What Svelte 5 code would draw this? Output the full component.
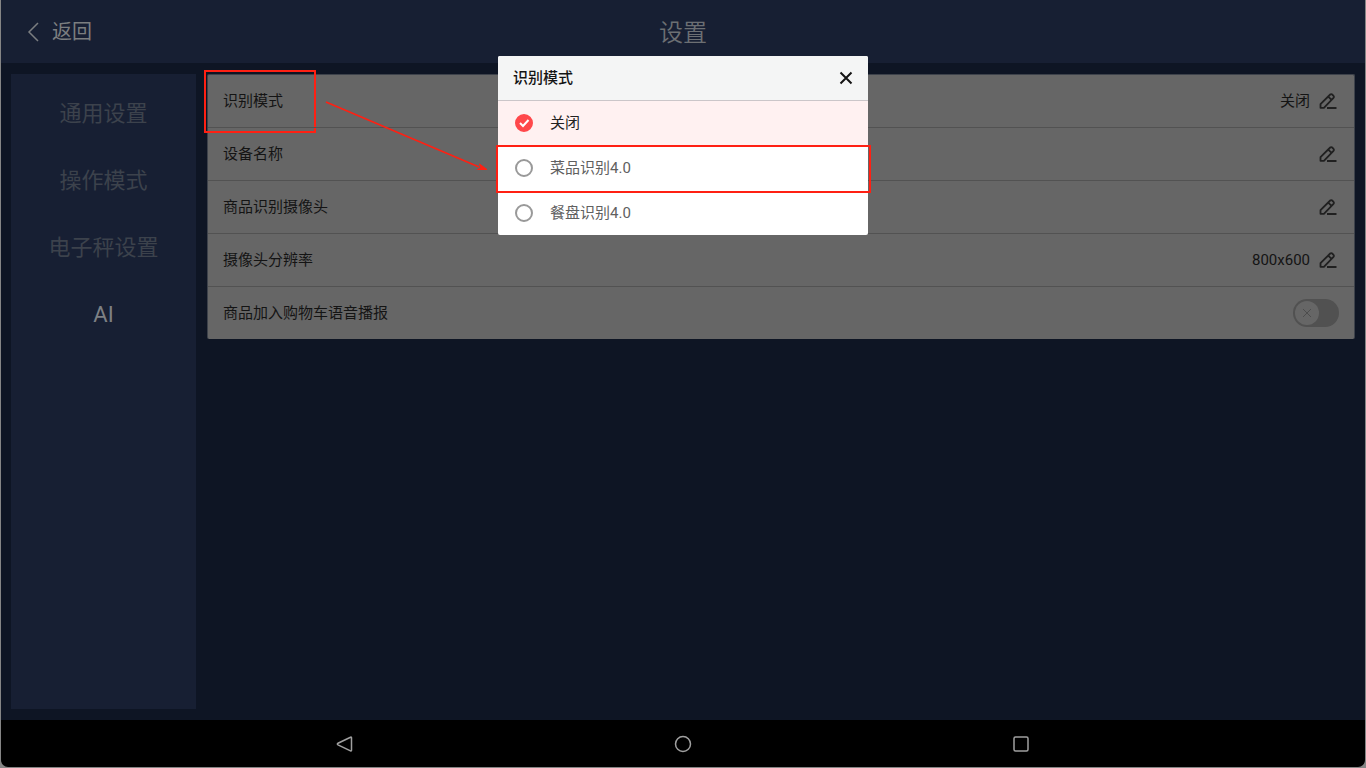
<script>
  const sections = ['通用设置', '操作模式', '电子秤设置', 'AI'];
  const rows = [
    { label: '识别模式', value: '关闭', marked: true },
    { label: '设备名称', value: '' },
    { label: '商品识别摄像头', value: '' },
    { label: '摄像头分辨率', value: '800x600' }
  ];
  const modes = ['关闭', '菜品识别4.0', '餐盘识别4.0'];

  let section = $state('AI');
  let mode = $state('关闭');
  let voice = $state(false);
</script>

<div class="screen">
  <header class="topbar">
    <button class="back">
      <svg width="12" height="20" viewBox="0 0 12 20" aria-hidden="true"><path d="M11 1 2 10l9 9" /></svg>
      返回
    </button>
    <h1>设置</h1>
  </header>

  <div class="content">
    <nav class="sidebar">
      {#each sections as name}
        <button class:active={section === name} onclick={() => (section = name)}>{name}</button>
      {/each}
    </nav>

    <main class="card">
      {#each rows as row}
        <div class="row">
          <span class="label" class:marked={row.marked}>{row.label}</span>
          {#if row.marked}
            <svg class="arrow" width="164" height="74" viewBox="0 0 164 74" aria-hidden="true">
              <path class="shaft" d="M1 2 154 67" />
              <path class="head" d="M162 69.500 152.500 69.500 156 68 154.500 64Z" />
            </svg>
          {/if}
          <span class="value">{row.value}</span>
          <button class="edit" aria-label={row.label}>
            <svg width="18" height="18" viewBox="0 0 18 18" aria-hidden="true">
              <path d="M1.500 15.800V12.200L11.200 2.500a1.400 1.400 0 0 1 2 0l1.300 1.300a1.400 1.400 0 0 1 0 2L4.900 15.800ZM9.300 4.600l3.200 3.200M8 16h9.500" />
            </svg>
          </button>
        </div>
      {/each}
      <div class="row">
        <label class="label" for="voice">商品加入购物车语音播报</label>
        <span class="switch">
          <input id="voice" type="checkbox" bind:checked={voice} />
          <span class="knob">
            <svg width="10" height="10" viewBox="0 0 10 10" aria-hidden="true"><path d="m1 1 8 8M9 1 1 9" /></svg>
          </span>
        </span>
      </div>
    </main>
  </div>

  <footer class="system">
    <button aria-label="返回"><svg width="20" height="20" viewBox="0 0 20 20" aria-hidden="true"><path d="M16.500 3.700v12.600q0 1-1 .5L3 10.900q-1.300-.9 0-1.700L15.500 3.200q1-.5 1 .5Z" /></svg></button>
    <button aria-label="主页"><svg width="20" height="20" viewBox="0 0 20 20" aria-hidden="true"><circle cx="10" cy="10" r="7.500" /></svg></button>
    <button aria-label="最近"><svg width="20" height="20" viewBox="0 0 20 20" aria-hidden="true"><rect x="3" y="3" width="14" height="14" rx="1.500" /></svg></button>
  </footer>

  <div class="dialog" role="dialog" aria-labelledby="dialog-title">
    <div class="dialog-head">
      <h2 id="dialog-title">识别模式</h2>
      <button aria-label="关闭"><svg width="14" height="14" viewBox="0 0 14 14" aria-hidden="true"><path d="m1.500 1.500 11 11M12.500 1.500l-11 11" /></svg></button>
    </div>
    <div class="options">
      {#each modes as name, i}
        <label class="option" class:selected={mode === name} class:outlined={i === 1}>
          <span class="radio">
            <input type="radio" name="mode" value={name} bind:group={mode} />
            <svg width="18" height="18" viewBox="0 0 18 18" aria-hidden="true"><path d="m5 9 3 3 5.500-6" /></svg>
          </span>
          {name}
        </label>
      {/each}
    </div>
  </div>
</div>

<style>
  :global(body) {
    margin: 0;
    background: #858585;
  }
  .screen, .screen * { box-sizing: border-box; }
  .screen {
    position: relative;
    display: flex;
    flex-direction: column;
    min-height: 100vh;
    padding: 0 1px 1px;
    font-family: Roboto, "Noto Sans CJK SC", sans-serif;
    font-size: 15px;
    line-height: 22px;
    font-weight: 400;
    color: #141414;
  }
  button {
    display: flex;
    align-items: center;
    justify-content: center;
    padding: 0;
    border: 0;
    background: none;
    font: inherit;
    color: inherit;
    cursor: pointer;
  }
  h1, h2 { margin: 0; }
  svg { display: block; flex: none; fill: none; stroke: currentColor; }

  .topbar {
    display: grid;
    grid-template-columns: 1fr auto 1fr;
    align-items: center;
    height: 63px;
    padding: 0 26px;
    background: #171f33;
    color: #6c6f73;
  }
  .back {
    justify-self: start;
    gap: 13px;
    font-size: 20px;
    color: #7b7e80;
  }
  .back svg { stroke-width: 1.5; }
  h1 {
    grid-column: 2;
    padding-top: 2px;
    font-size: 24px;
    line-height: 32px;
    font-weight: 350;
  }

  .content {
    flex: 1;
    display: flex;
    align-items: stretch;
    gap: 11px;
    padding: 11px 10px;
    background: #0e1524;
  }
  .sidebar {
    flex: none;
    width: 185px;
    padding-top: 6px;
    background: #171f33;
    color: #3c424c;
    font-size: 22px;
  }
  .sidebar button { width: 100%; height: 67px; }
  .sidebar .active { color: #7d8084; }

  .card {
    flex: 1;
    align-self: flex-start;
    border: 1px solid #3d424b;
    border-width: 1px 1px 0;
    border-radius: 2px;
    background: #666;
  }
  .row {
    position: relative;
    display: flex;
    align-items: center;
    height: 53px;
    padding: 0 16px 0 15px;
  }
  .row:first-child { height: 52px; }
  .row + .row { border-top: 1px solid #525252; }
  .label { position: relative; }
  .marked::after {
    content: "";
    position: absolute;
    inset: -20px -33px -21px -19px;
    border: 2px solid #ff2013;
  }
  .arrow {
    position: absolute;
    left: 117px;
    top: 25px;
    z-index: 1;
    color: #ff2013;
  }
  .shaft { stroke-width: 1.6; }
  .head { fill: currentColor; }
  .value { margin-left: auto; margin-right: 8px; }
  .edit { width: 20px; height: 20px; color: #202020; }
  .edit svg { stroke-width: 1.8; stroke-linejoin: round; }

  .switch {
    display: grid;
    align-items: center;
    margin-left: auto;
    margin-right: -1px;
  }
  .switch input, .knob { grid-area: 1 / 1; }
  .switch input {
    appearance: none;
    width: 46px;
    height: 28px;
    margin: 0;
    border-radius: 14px;
    background: #515151;
  }
  .knob {
    display: grid;
    place-items: center;
    width: 24px;
    height: 24px;
    margin-left: 2px;
    border-radius: 50%;
    background: #666;
    color: #4d4d4d;
    pointer-events: none;
  }
  .switch input:checked + .knob { margin-left: 20px; }

  .system {
    display: grid;
    grid-template-columns: repeat(3, 1fr);
    height: 47px;
    padding: 0 175px;
    border-radius: 0 0 7px 7px;
    background: #000;
    color: #a0a0a0;
  }
  .system svg { stroke-width: 1.5; }

  .dialog {
    position: absolute;
    z-index: 2;
    top: 56px;
    left: 0;
    right: 0;
    width: 370px;
    max-width: 100%;
    margin: 0 auto;
    border-radius: 2px;
    background: #fff;
  }
  .dialog-head {
    display: flex;
    align-items: center;
    justify-content: space-between;
    height: 44px;
    padding: 0 15px;
    border-radius: 2px 2px 0 0;
    background: #f4f5f5;
  }
  h2 { font-size: 15px; font-weight: 500; line-height: 22px; }
  .dialog-head svg { stroke-width: 2; }
  .option {
    position: relative;
    display: flex;
    align-items: center;
    gap: 17px;
    height: 45px;
    padding: 0 17px;
    color: #606060;
  }
  .option:first-child { border-top: 1px solid #cbc6c9; }
  .selected { background: #fff1f1; color: #222; }
  .outlined::after {
    content: "";
    position: absolute;
    inset: 0 -3px -3px -2px;
    border: 2px solid #ff2013;
    pointer-events: none;
  }
  .radio { display: grid; }
  .radio input, .radio svg { grid-area: 1 / 1; }
  .radio input {
    appearance: none;
    width: 18px;
    height: 18px;
    margin: 0;
    border: 2px solid #999;
    border-radius: 50%;
  }
  .radio input:checked { border-color: #ff484b; background: #ff484b; }
  .radio svg { visibility: hidden; color: #fff; stroke-width: 2; pointer-events: none; }
  .radio input:checked + svg { visibility: visible; }
</style>
